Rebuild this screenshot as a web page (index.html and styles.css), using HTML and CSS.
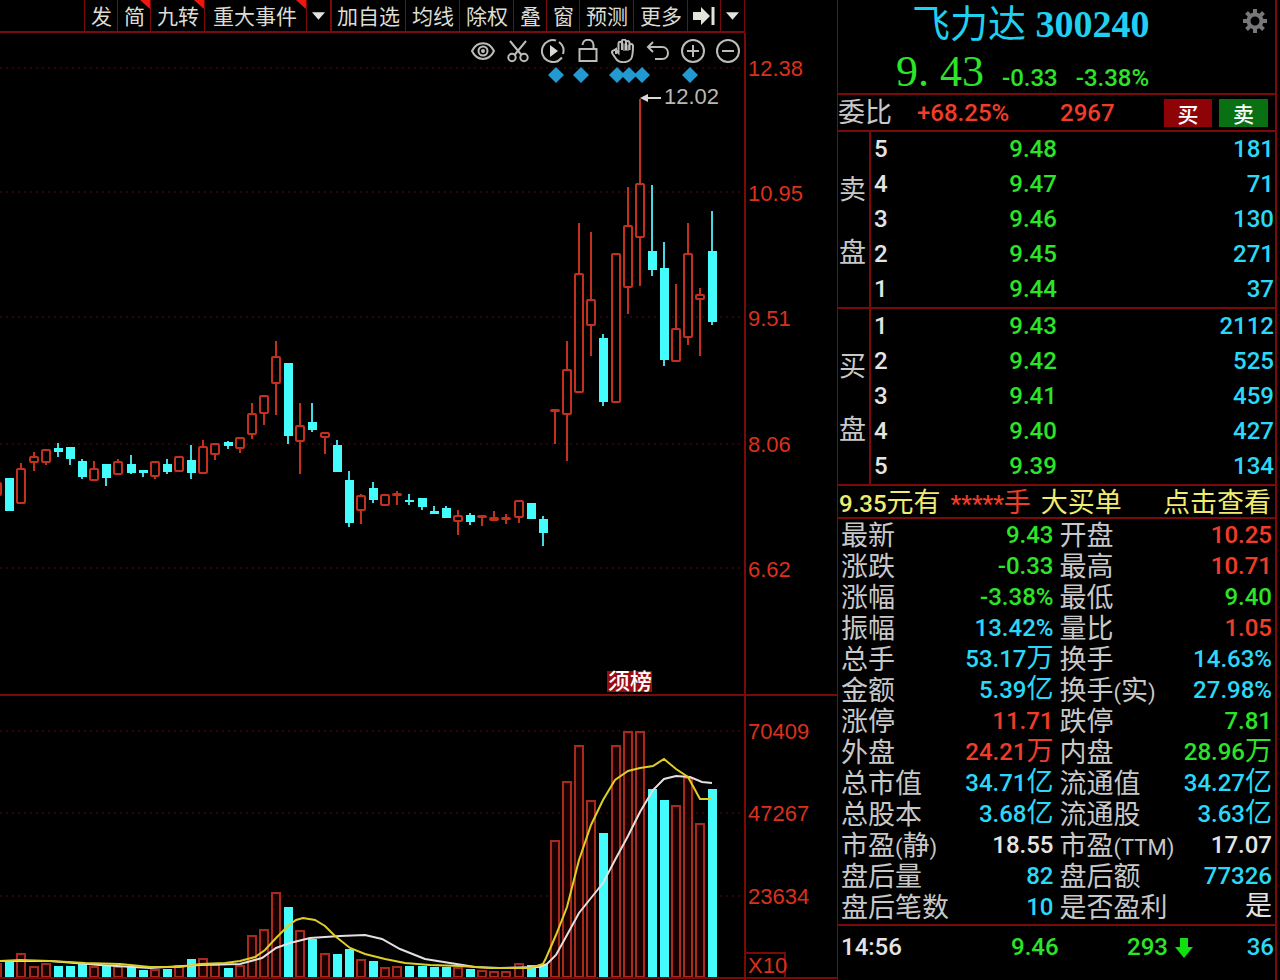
FILE: index.html
```html
<!DOCTYPE html>
<html lang="zh-CN">
<head>
<meta charset="utf-8">
<meta name="viewport" content="width=device-width, initial-scale=1">
<title>飞力达 300240</title>
<link rel="stylesheet" href="styles.css">
</head>
<body>
<main class="app">
  <section class="charts">
    <div class="toolbar-row">
      <nav class="toolbar">
        <button>发</button>
        <button class="flag">简</button>
        <button class="flag">九转</button>
        <button class="flag roomy">重大事件</button>
        <button class="caret" aria-label="展开事件"><svg viewBox="0 0 14 8"><path d="M0 0H14L7 8Z"/></svg></button>
        <button class="strong">加自选</button>
        <button>均线</button>
        <button>除权</button>
        <button>叠</button>
        <button>窗</button>
        <button>预测</button>
        <button>更多</button>
        <button class="caret" aria-label="移到最右"><svg class="jump" viewBox="0 0 22 20"><path d="M0 6H8V1L17 10L8 19V14H0ZM18.500 1H21.500V19H18.500Z"/></svg></button>
        <button class="caret" aria-label="展开菜单"><svg viewBox="0 0 14 8"><path d="M0 0H14L7 8Z"/></svg></button>
      </nav>
    </div>
    <div class="price-area">
      <div class="tools">
        <button aria-label="显示"><svg viewBox="0 0 24 24"><path d="M1 12C6 1.500 18 1.500 23 12C18 22.500 6 22.500 1 12Z"/><circle cx="12" cy="12" r="4.500"/><circle cx="12" cy="12" r="1"/></svg></button>
        <button aria-label="剪切"><svg viewBox="0 0 24 24"><path d="M4 2L15.500 16M20 2L8.500 16"/><circle cx="6" cy="18.500" r="3.700"/><circle cx="18" cy="18.500" r="3.700"/></svg></button>
        <button aria-label="回放"><svg viewBox="0 0 24 24"><path d="M15 1.500A11 11 0 1 0 20.500 19M18 3A11 11 0 0 1 22 15M16 23L21 18.500"/><path class="solid" d="M9 6L17 12L9 18Z"/></svg></button>
        <button aria-label="锁定"><svg viewBox="0 0 24 24"><path d="M3.500 10H20.500V22H3.500ZM6.500 6C7 -1 17 -1 17.500 6V10"/></svg></button>
        <button aria-label="拖动"><svg viewBox="0 0 24 24"><path d="M5 15V10L2.500 11.500C0 12 1 14 2 15.500L6 21C9 24 17 24 20 20C22 17 22 13 22 6.500C21.500 4.500 19 4.500 18.500 6.500V11M18.500 8V3.500C18 1.500 15 1.500 15 3.500V11M15 5V2C14 0 11.500 0 11 2V11M11 4C10 2 7.500 2.500 7.500 4.500V14L5 11.500"/><path class="solid" d="M12 4V12H18V6Z" opacity=".5"/></svg></button>
        <button aria-label="撤销"><svg viewBox="0 0 24 24"><path d="M2 8H16C24 8 24 20 16 20H9M7 3L2 8L7 13"/></svg></button>
        <button aria-label="放大"><svg viewBox="0 0 24 24"><circle cx="12" cy="12" r="11"/><path d="M6 12H18M12 6V18"/></svg></button>
        <button aria-label="缩小"><svg viewBox="0 0 24 24"><circle cx="12" cy="12" r="11"/><path d="M6 12H18"/></svg></button>
      </div>
      <svg class="chart" id="price" viewBox="0 33 837 661" role="img" aria-label="日K线">
        <path class="grid" d="M0 68H745M0 192H745M0 317H745M0 444H745M0 568H745"/>
        <path class="frame" d="M745 0V694"/>
        <g id="candles"></g>
        <path class="mark" d="M556 67l8 8-8 8-8-8zM581 67l8 8-8 8-8-8zM617 67l8 8-8 8-8-8zM629 67l8 8-8 8-8-8zM642 67l8 8-8 8-8-8zM690 67l8 8-8 8-8-8z"/>
        <path class="pointer" d="M640 98L648 94V97H661V99H648V102Z"/>
        <text class="peak" x="664" y="104">12.02</text>
        <text x="748" y="76">12.38</text>
        <text x="748" y="201">10.95</text>
        <text x="748" y="326">9.51</text>
        <text x="748" y="452">8.06</text>
        <text x="748" y="577">6.62</text>
        <rect class="badge" x="607" y="671" width="45" height="21"/>
        <text class="badge-text" x="608" y="689">须榜</text>
      </svg>
    </div>
    <svg class="chart" id="volume" viewBox="0 694 837 286" role="img" aria-label="成交量">
      <path class="grid" d="M0 731H745M0 813H745M0 896H745"/>
      <g id="bars"></g>
      <path class="frame" d="M0 695H837M745 694V980M0 978H837M746 953H785V977"/>
      <path class="ma-slow" d="M0 961L50 961L100 965L150 968L200 965L240 964L262 958L276 948L290 943L310 938L340 936L365 935L382 939L400 949L425 959L450 963L475 967L500 968L540 967L547 964L556 955L567 935L579 913L591 898L603 883L615 860L628 836L640 812L653 790L664 779L676 776L690 777L702 782L712 783"/>
      <path class="ma-fast" d="M0 961L20 960L50 961L85 963L120 964L150 967L180 967L200 964L225 963L240 961L255 957L265 950L276 938L288 926L296 920L303 918L315 920L325 926L335 936L350 948L365 954L385 959L405 963L430 965L460 966L490 968L530 968L543 964L546 958L556 935L567 907L579 860L591 825L603 800L615 780L628 771L640 768L653 766L664 759L676 769L688 777L700 799L712 799"/>
      <text x="748" y="739">70409</text>
      <text x="748" y="821">47267</text>
      <text x="748" y="904">23634</text>
      <text x="748" y="973">X10</text>
    </svg>
  </section>

  <section class="quote">
    <header class="head">
      <h1><span class="cn">飞力达</span> 300240</h1>
      <button class="gear" aria-label="设置"><svg viewBox="0 0 24 24"><circle cx="12" cy="12" r="6.500"/><path d="M12 0V5M12 19V24M0 12H5M19 12H24M3.500 3.500L7 7M17 17L20.500 20.500M20.500 3.500L17 7M7 17L3.500 20.500"/></svg></button>
      <p class="last down"><strong>9. 43</strong><span>-0.33</span><span>-3.38%</span></p>
    </header>
    <div class="ratio">
      <span class="label">委比</span><span class="up">+68.25%</span><span class="up">2967</span>
      <button class="buy">买</button><button class="sell">卖</button>
    </div>
    <div class="depth">
      <div class="side"><span>卖</span><span>盘</span></div>
      <table>
        <tr><th>5</th><td class="down">9.48</td><td class="qty">181</td></tr>
        <tr><th>4</th><td class="down">9.47</td><td class="qty">71</td></tr>
        <tr><th>3</th><td class="down">9.46</td><td class="qty">130</td></tr>
        <tr><th>2</th><td class="down">9.45</td><td class="qty">271</td></tr>
        <tr><th>1</th><td class="down">9.44</td><td class="qty">37</td></tr>
      </table>
    </div>
    <div class="depth">
      <div class="side"><span>买</span><span>盘</span></div>
      <table>
        <tr><th>1</th><td class="down">9.43</td><td class="qty">2112</td></tr>
        <tr><th>2</th><td class="down">9.42</td><td class="qty">525</td></tr>
        <tr><th>3</th><td class="down">9.41</td><td class="qty">459</td></tr>
        <tr><th>4</th><td class="down">9.40</td><td class="qty">427</td></tr>
        <tr><th>5</th><td class="down">9.39</td><td class="qty">134</td></tr>
      </table>
    </div>
    <div class="alert">
      <span><b>9.35</b>元有</span><span class="up"><b>*****</b>手</span><span>大买单</span>
      <button>点击查看</button>
    </div>
    <table class="stats">
      <tr><th>最新</th><td class="down">9.43</td><th>开盘</th><td class="up">10.25</td></tr>
      <tr><th>涨跌</th><td class="down">-0.33</td><th>最高</th><td class="up">10.71</td></tr>
      <tr><th>涨幅</th><td class="down">-3.38%</td><th>最低</th><td class="down">9.40</td></tr>
      <tr><th>振幅</th><td class="info">13.42%</td><th>量比</th><td class="up">1.05</td></tr>
      <tr><th>总手</th><td class="info">53.17<i>万</i></td><th>换手</th><td class="info">14.63%</td></tr>
      <tr><th>金额</th><td class="info">5.39<i>亿</i></td><th>换手<small>(</small>实<small>)</small></th><td class="info">27.98%</td></tr>
      <tr><th>涨停</th><td class="up">11.71</td><th>跌停</th><td class="down">7.81</td></tr>
      <tr><th>外盘</th><td class="up">24.21<i>万</i></td><th>内盘</th><td class="down">28.96<i>万</i></td></tr>
      <tr><th>总市值</th><td class="info">34.71<i>亿</i></td><th>流通值</th><td class="info">34.27<i>亿</i></td></tr>
      <tr><th>总股本</th><td class="info">3.68<i>亿</i></td><th>流通股</th><td class="info">3.63<i>亿</i></td></tr>
      <tr><th>市盈<small>(</small>静<small>)</small></th><td>18.55</td><th>市盈<small>(TTM)</small></th><td>17.07</td></tr>
      <tr><th>盘后量</th><td class="info">82</td><th>盘后额</th><td class="info">77326</td></tr>
      <tr><th>盘后笔数</th><td class="info">10</td><th>是否盈利</th><td><i>是</i></td></tr>
    </table>
    <div class="tick">
      <span>14:56</span><span class="down">9.46</span>
      <span class="down">293<svg viewBox="0 0 18 20"><path d="M5 0H13V9H18L9 20L0 9H5Z"/></svg></span>
      <span class="qty">36</span>
    </div>
  </section>
</main>
<script src="chart.js"></script>
</body>
</html>
```

FILE: styles.css
```css
* { box-sizing: border-box; }

body {
  margin: 0;
  background: #000;
  color: #e4e4e4;
  font-family: Roboto, "Noto Sans CJK SC", sans-serif;
  font-size: 24px;
}

button {
  margin: 0;
  padding: 0;
  border: 0;
  background: none;
  color: inherit;
  font: inherit;
}

h1, p { margin: 0; }

.app {
  display: grid;
  grid-template-columns: minmax(0, 837fr) minmax(0, 443fr);
  min-height: 100vh;
  overflow: hidden;
}

/* toolbar */
.toolbar-row { padding-right: 11%; }

.toolbar {
  display: flex;
  justify-content: flex-end;
  height: 33px;
  border-bottom: 2px solid #7c0a0a;
  border-right: 1px solid #7c0a0a;
}

.toolbar button {
  position: relative;
  flex: none;
  padding: 0 5px 0 6px;
  border-left: 1px solid #7c0a0a;
  color: #dcdcd4;
  font-family: "Noto Sans CJK SC", sans-serif;
  font-size: 21px;
  line-height: 29px;
  white-space: nowrap;
}

.toolbar .roomy { padding: 0 9px 0 8px; }
.toolbar .strong { padding: 0 5px; border-left-width: 2px; }
.toolbar .caret { padding: 0 5px; }
.toolbar svg { display: block; width: 13px; height: 8px; fill: #e4e4dc; }
.toolbar .jump { width: 22px; height: 20px; }

.toolbar .flag::after {
  content: "";
  position: absolute;
  top: 0;
  right: 0;
  width: 10px;
  height: 9px;
  background: #f0180c;
  clip-path: polygon(0 0, 100% 0, 100% 100%);
}

/* charts */
.price-area { position: relative; }

.tools {
  position: absolute;
  top: 6px;
  right: 11.6%;
  display: flex;
  gap: 11px;
}

.tools svg {
  display: block;
  width: 24px;
  height: 24px;
  fill: none;
  stroke: #bdbdb8;
  stroke-width: 2;
}

.tools .solid { fill: #d8d8d4; stroke: none; }

.chart {
  display: block;
  width: 100%;
  height: auto;
  fill: none;
}

.chart text {
  fill: #dc301c;
  font-family: "Liberation Sans", Arial, sans-serif;
  font-size: 22px;
}

.chart .peak { fill: #b8b8b4; }

.chart .badge-text {
  fill: #fff;
  font-family: "Noto Sans CJK SC", sans-serif;
  font-weight: 500;
}

.badge { fill: #980c10; }
.grid { stroke: #5c0a08; stroke-width: 1; stroke-dasharray: 2 4; }
.frame { stroke: #780a0a; stroke-width: 2; }
.mark { fill: #2299d0; }
.pointer { fill: #d8d8d8; }
.rise { stroke: #c4301e; stroke-width: 2; fill: #000; }
.rise-bar { stroke: #a82a1c; stroke-width: 2; fill: #1c0000; }
.fall { stroke: #48d8e0; stroke-width: 2; }
.fall-body { fill: #44fcfc; }
.ma-fast { stroke: #dcd028; stroke-width: 2; }
.ma-slow { stroke: #e4e0e0; stroke-width: 2; }

/* quote panel */
.quote {
  margin-right: 3px;
  border: solid #7c0a0a;
  border-width: 0 2px 0 1px;
  font-weight: 500;
}

.up { color: #f03c28; }
.down { color: #2ce428; }
.info, .qty { color: #2cd8f8; }

.head {
  position: relative;
  padding-left: 58px;
  height: 95px;
  border-bottom: 2px solid #7c0a0a;
}

.head h1 {
  padding-left: 16px;
  color: #20d0f0;
  font-family: "Liberation Serif", serif;
  font-size: 38px;
  line-height: 42px;
  white-space: nowrap;
}

.head .cn {
  font-family: "Noto Sans CJK SC", sans-serif;
  font-weight: 400;
}

.gear {
  position: absolute;
  top: 9px;
  right: 8px;
}

.gear svg {
  display: block;
  width: 24px;
  height: 24px;
  fill: none;
  stroke: #77777a;
  stroke-width: 4;
}

.last {
  display: flex;
  align-items: baseline;
  gap: 18px;
  line-height: 54px;
}

.last strong {
  font-family: "Liberation Serif", serif;
  font-size: 44px;
  font-weight: 400;
  white-space: pre;
}

.ratio {
  display: grid;
  grid-template-columns: 79px 143px 1fr 55px 49px;
  align-items: center;
  height: 37px;
  padding-right: 7px;
  border-bottom: 2px solid #7c0a0a;
}

.ratio .label, .side, .alert, .stats th, .stats i {
  font-family: "Noto Sans CJK SC", sans-serif;
  font-size: 27px;
  font-style: normal;
  font-weight: 400;
}

.ratio .label { color: #c8c8c8; line-height: 32px; padding-bottom: 3px; }

.ratio button {
  height: 28px;
  color: #fff;
  font-family: "Noto Sans CJK SC", sans-serif;
  font-size: 21px;
  font-weight: 500;
  line-height: 24px;
}

.ratio .buy { margin-right: 7px; background: #8e0406; }
.ratio .sell { background: #0a7014; }

.depth {
  display: grid;
  grid-template-columns: 33px 1fr;
  border-bottom: 2px solid #7c0a0a;
}

.side {
  display: flex;
  flex-direction: column;
  justify-content: center;
  gap: 23px;
  padding-left: 1px;
  border-right: 2px solid #7c0a0a;
  color: #c8c8c8;
  line-height: 40px;
}

table { border-collapse: collapse; width: 100%; table-layout: fixed; }
th, td { padding: 0; white-space: nowrap; }

.depth th, .depth td { height: 35px; line-height: 35px; }
.depth th { width: 33%; padding-left: 3px; text-align: left; font-weight: 500; }
.depth td { padding-left: 5px; }
.depth .qty { padding-right: 1px; text-align: right; }

.alert {
  display: flex;
  align-items: center;
  gap: 10px;
  height: 33px;
  padding: 0 4px 2px 1px;
  border-bottom: 2px solid #7c0a0a;
  color: #f0ec70;
  line-height: 29px;
  white-space: nowrap;
}

.alert b {
  font-family: Roboto, sans-serif;
  font-size: 24px;
  font-weight: 500;
  line-height: 0;
}

.alert .up { color: #f03c28; }
.alert button { margin-left: auto; }

.stats { margin-top: 1px; }
.stats th, .stats td { height: 31px; line-height: 31px; }
.stats th {
  width: 28%;
  padding-left: 3px;
  color: #c8c8c8;
  line-height: 28px;
  text-align: left;
  vertical-align: top;
}
.stats td { width: 22%; padding-right: 3px; text-align: right; }
.stats i { line-height: 0; }

.stats small {
  font-family: Roboto, sans-serif;
  font-size: 22px;
  font-weight: 400;
  line-height: 0;
}

.tick {
  display: grid;
  grid-template-columns: 170px 116px 1fr auto;
  padding: 0 1px 0 3px;
  margin-top: 1px;
  border-top: 2px solid #7c0a0a;
  line-height: 42px;
}

.tick svg {
  width: 18px;
  height: 20px;
  margin-left: 7px;
  vertical-align: -3px;
  fill: #10e010;
}
```

FILE: chart.js
```js
// Each day: [direction, body top, body bottom, high, low, volume top]
const days = [
  ["r",483,495,483,495,963],
  ["c",478,511,478,511,960],["r",469,503,463,503,953],["r",457,462,452,471,966],
  ["r",450,462,450,465,963],["c",448,452,443,457,966],["c",447,459,447,465,966],
  ["c",461,477,459,479,964],["r",469,480,461,480,966],["c",464,478,464,486,966],
  ["r",462,474,459,474,966],["c",464,473,455,474,967],["c",470,473,470,477,970],
  ["r",462,476,462,479,969],["c",464,472,459,474,969],["r",457,471,457,471,965],
  ["c",460,473,445,479,959],["r",447,473,440,473,958],["r",444,454,444,460,964],
  ["c",442,446,441,449,968],["r",438,448,438,453,965],["r",414,434,403,439,935],
  ["r",396,413,396,425,929],["r",357,383,341,415,892],["c",363,436,363,444,907],
  ["r",426,441,403,474,930],["c",422,430,403,432,939],["r",433,437,433,454,953],
  ["c",445,472,440,472,954],["c",480,523,471,527,949],["r",496,510,494,524,959],
  ["c",488,500,482,503,961],["r",495,505,495,505,967],["r",494,495,491,505,966],
  ["c",500,502,494,505,966],["c",498,507,498,510,966],["c",511,514,506,514,967],
  ["c",508,518,506,518,967],["r",516,521,510,535,967],["c",515,522,513,525,969],
  ["r",516,517,516,526,970],["r",518,520,511,520,971],["r",518,519,514,524,971],
  ["r",501,517,501,523,963],["c",503,519,503,519,965],["c",519,533,516,546,964],
  ["r",410,411,410,444,840],["r",370,414,341,461,781],["r",274,392,223,392,745],
  ["r",300,325,232,356,800],["c",338,402,334,406,833],["r",254,402,254,402,745],
  ["r",226,287,187,314,731],["r",184,237,99,286,731],["c",251,270,185,276,789],
  ["c",268,360,242,366,800],["r",329,361,284,361,805],["r",254,337,223,345,777],
  ["r",295,299,288,356,823],["c",251,322,211,325,789]
];

const NS = "http://www.w3.org/2000/svg";
const candles = document.getElementById("candles");
const bars = document.getElementById("bars");
const STEP = 12.124;
const BASE = 977;

function add(parent, name, attrs) {
  const node = document.createElementNS(NS, name);
  for (const key in attrs) node.setAttribute(key, attrs[key]);
  parent.appendChild(node);
}

days.forEach(([kind, top, bottom, high, low, volume], i) => {
  const x = Math.round(9.3 + STEP * (i - 1));
  const rising = kind === "r";
  add(candles, "path", { class: rising ? "rise" : "fall", d: `M${x} ${high}V${low}` });
  if (rising) {
    add(candles, "rect", { class: "rise", x: x - 4, y: top, width: 8, height: Math.max(bottom - top, 1), rx: 1 });
    add(bars, "rect", { class: "rise-bar", x: x - 4, y: volume + 1, width: 8, height: BASE - volume - 1 });
  } else {
    add(candles, "rect", { class: "fall-body", x: x - 4, y: top, width: 9, height: bottom - top });
    add(bars, "rect", { class: "fall-body", x: x - 4, y: volume, width: 9, height: BASE - volume });
  }
});
```
